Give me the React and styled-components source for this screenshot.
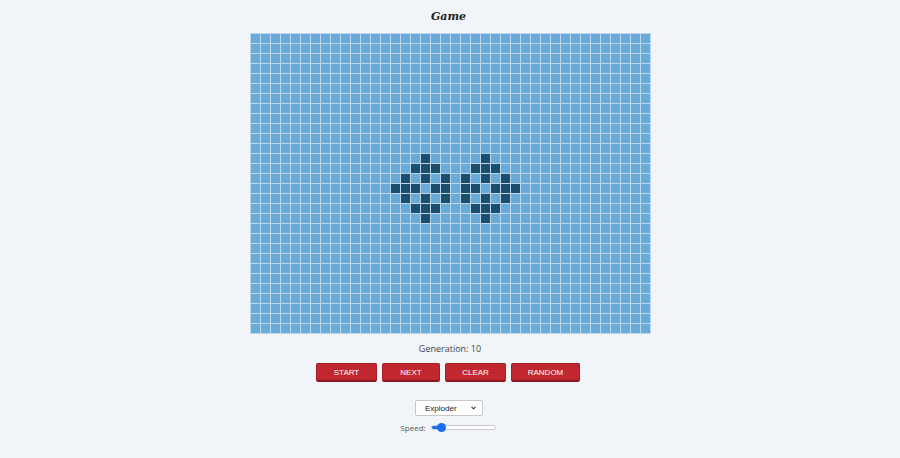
import React, { useState } from 'react'
import styled, { createGlobalStyle } from 'styled-components'

const COLS = 40
const ROWS = 30

// live cells of the exploder pair, as [row, col]
const LIVE = [
  [12, 17], [12, 23],
  [13, 16], [13, 17], [13, 18], [13, 22], [13, 23], [13, 24],
  [14, 15], [14, 17], [14, 19], [14, 21], [14, 23], [14, 25],
  [15, 14], [15, 15], [15, 16], [15, 18], [15, 19], [15, 21], [15, 22], [15, 24], [15, 25], [15, 26],
  [16, 15], [16, 17], [16, 19], [16, 21], [16, 23], [16, 25],
  [17, 16], [17, 17], [17, 18], [17, 22], [17, 23], [17, 24],
  [18, 17], [18, 23],
]

const chevron =
  "data:image/svg+xml;utf8,<svg xmlns='http://www.w3.org/2000/svg' width='5' height='4' viewBox='0 0 5 4'><path d='M0.5 0.8 L2.5 2.8 L4.5 0.8' fill='none' stroke='%23333' stroke-width='1.1'/></svg>"

const GlobalStyle = createGlobalStyle`
  body {
    margin: 0;
    background: #f1f5f9;
    font-family: "Open Sans", "Liberation Sans", sans-serif;
  }
`

const Page = styled.div`
  display: flex;
  flex-direction: column;
  align-items: center;
  padding-top: 9px;
`

const Title = styled.h1`
  margin: 0 3px 9px 0;
  font-family: "DejaVu Serif", serif;
  font-style: italic;
  font-weight: bold;
  font-size: 11px;
  line-height: 15px;
  color: #222;
`

const Board = styled.div`
  display: grid;
  grid-template-columns: repeat(${COLS}, 9px);
  grid-auto-rows: 9px;
  gap: 1px;
  padding: 1px;
  background: #bcd7ec;
`

const Cell = styled.div`
  background: ${(props) => (props.alive ? '#1b4e6d' : '#68abd9')};
`

const Generation = styled.p`
  margin: 9px 0 8px;
  font-size: 9px;
  line-height: 12px;
  color: #444;
`

const ButtonRow = styled.div`
  display: flex;
  gap: 5px;
  margin-right: 4px;
`

const Button = styled.button`
  width: ${(props) => props.w}px;
  height: 19px;
  padding: 0;
  background: #c1272e;
  border: 1px solid #a81f25;
  border-bottom: 2px solid #8c171c;
  border-radius: 2px;
  color: #fff;
  font-family: "Liberation Sans", Arial, sans-serif;
  font-size: 8px;
  text-transform: uppercase;
  cursor: pointer;
`

const Select = styled.select`
  -webkit-appearance: none;
  appearance: none;
  margin-top: 18px;
  margin-right: 2px;
  width: 68px;
  height: 16px;
  padding: 0 3px 0 9px;
  font-family: "Liberation Sans", Arial, sans-serif;
  font-size: 8px;
  color: #222;
  background: #fff url("${chevron}") no-repeat right 6px center;
  border: 1px solid #c7c7c7;
  border-radius: 2px;
`

const SpeedRow = styled.label`
  display: flex;
  align-items: center;
  gap: 5px;
  margin: 6px 4px 0 0;
  font-size: 8px;
  color: #555;
`

const Range = styled.input`
  -webkit-appearance: none;
  appearance: none;
  box-sizing: border-box;
  width: 65px;
  height: 5px;
  margin: 0;
  border-radius: 3px;
  border: 1px solid #c9c9c9;
  background: linear-gradient(to right, #1a6ff0 0 ${(p) => p.fill}%, #fff ${(p) => p.fill}% 100%);

  &::-webkit-slider-thumb {
    -webkit-appearance: none;
    width: 9px;
    height: 9px;
    border-radius: 50%;
    background: #1a6ff0;
    border: none;
  }
`

export default function App() {
  const [speed, setSpeed] = useState(10)
  const alive = new Set(LIVE.map(([r, c]) => r * COLS + c))

  return (
    <Page>
      <GlobalStyle />
      <Title>Game</Title>
      <Board>
        {Array.from({ length: ROWS * COLS }, (_, i) => (
          <Cell key={i} alive={alive.has(i)} />
        ))}
      </Board>
      <Generation>Generation: 10</Generation>
      <ButtonRow>
        <Button w={61}>Start</Button>
        <Button w={58}>Next</Button>
        <Button w={61}>Clear</Button>
        <Button w={69}>Random</Button>
      </ButtonRow>
      <Select defaultValue="exploder">
        <option value="exploder">Exploder</option>
        <option value="glider">Glider</option>
        <option value="blinker">Blinker</option>
      </Select>
      <SpeedRow>
        Speed:
        <Range
          type="range"
          min="0"
          max="100"
          value={speed}
          fill={speed}
          onChange={(e) => setSpeed(e.target.value)}
        />
      </SpeedRow>
    </Page>
  )
}
